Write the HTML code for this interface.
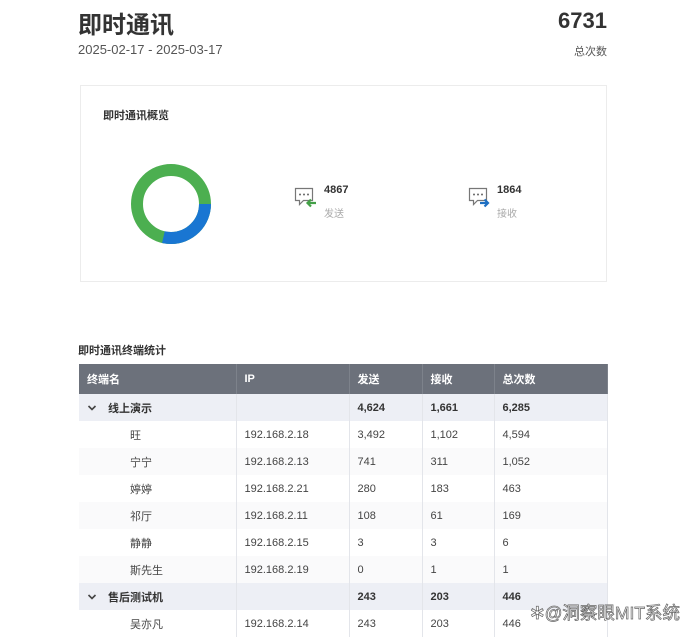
<!DOCTYPE html>
<html><head><meta charset="utf-8"><style>
*{margin:0;padding:0;box-sizing:border-box}
body{width:692px;height:639px;background:#fff;position:relative;overflow:hidden;font-family:"Liberation Sans","Noto Sans CJK SC",sans-serif;color:#333}
.a{position:absolute;white-space:nowrap}
table{position:absolute;left:79px;top:364px;width:528px;border-collapse:collapse;font-size:11px;table-layout:fixed}
td,th{height:27px;padding:0 0 0 8px;text-align:left;border-right:1px solid #e3e5ea;color:#444;font-weight:normal}
th{height:30px;background:#6c717b;color:#fff;font-weight:bold;border-right:1px solid #7d828b}
tr.g td{background:#edeff5;font-weight:bold;color:#333}
tr.s td{background:#fff}
tr.s2 td{background:#fafafb}
td.n{padding-left:51px}
.chev{display:inline-block;width:21px;vertical-align:middle}
</style></head><body>
<div class="a" style="left:78px;top:5px;font-size:24px;font-weight:bold;color:#333">即时通讯</div>
<div class="a" style="left:78px;top:42px;font-size:13px;color:#555">2025-02-17 - 2025-03-17</div>
<div class="a" style="right:85px;top:8px;font-size:22px;font-weight:bold;color:#333">6731</div>
<div class="a" style="right:85px;top:43px;font-size:11px;color:#555">总次数</div>

<div class="a" style="left:80px;top:85px;width:527px;height:197px;border:1px solid #ececec;background:#fff"></div>
<div class="a" style="left:103px;top:107px;font-size:11px;font-weight:bold;color:#333">即时通讯概览</div>
<svg class="a" style="left:127px;top:160px" width="88" height="88" viewBox="0 0 88 88">
<circle cx="44" cy="44" r="34" fill="none" stroke="#4caf50" stroke-width="12"/>
<circle cx="44" cy="44" r="34" fill="none" stroke="#1976d2" stroke-width="12" stroke-dasharray="61 300"/>
</svg>
<svg class="a" style="left:294px;top:187px" width="24" height="22" viewBox="0 0 24 22">
<path d="M1.5 1.5h17v12h-9l-4 4v-4h-4z" fill="none" stroke="#777" stroke-width="1.2"/>
<circle cx="6" cy="7.5" r="1" fill="#666"/><circle cx="10" cy="7.5" r="1" fill="#666"/><circle cx="14" cy="7.5" r="1" fill="#666"/>
<path d="M22 16h-8M17 12.5l-3.5 3.5 3.5 3.5" fill="none" stroke="#43a047" stroke-width="2.2"/>
</svg>
<div class="a" style="left:324px;top:184px;font-size:11px;font-weight:bold;color:#333">4867</div>
<div class="a" style="left:324px;top:205px;font-size:10px;color:#aaa">发送</div>
<svg class="a" style="left:468px;top:187px" width="24" height="22" viewBox="0 0 24 22">
<path d="M1.5 1.5h17v12h-9l-4 4v-4h-4z" fill="none" stroke="#777" stroke-width="1.2"/>
<circle cx="6" cy="7.5" r="1" fill="#666"/><circle cx="10" cy="7.5" r="1" fill="#666"/><circle cx="14" cy="7.5" r="1" fill="#666"/>
<path d="M12 16h8M16.5 12.5l3.5 3.5-3.5 3.5" fill="none" stroke="#1e6fc2" stroke-width="2.2"/>
</svg>
<div class="a" style="left:497px;top:184px;font-size:11px;font-weight:bold;color:#333">1864</div>
<div class="a" style="left:497px;top:205px;font-size:10px;color:#aaa">接收</div>

<div class="a" style="left:78px;top:342px;font-size:11px;font-weight:bold;color:#333">即时通讯终端统计</div>
<table>
<colgroup><col style="width:157px"><col style="width:113px"><col style="width:73px"><col style="width:72px"><col style="width:113px"></colgroup>
<tr><th>终端名</th><th>IP</th><th>发送</th><th>接收</th><th>总次数</th></tr>
<tr class="g"><td><span class="chev"><svg width="10" height="8" viewBox="0 0 10 8"><path d="M1.5 2l3.5 3.5 3.5-3.5" fill="none" stroke="#444" stroke-width="1.6"/></svg></span>线上演示</td><td></td><td>4,624</td><td>1,661</td><td>6,285</td></tr>
<tr class="s"><td class="n">旺</td><td>192.168.2.18</td><td>3,492</td><td>1,102</td><td>4,594</td></tr>
<tr class="s2"><td class="n">宁宁</td><td>192.168.2.13</td><td>741</td><td>311</td><td>1,052</td></tr>
<tr class="s"><td class="n">婷婷</td><td>192.168.2.21</td><td>280</td><td>183</td><td>463</td></tr>
<tr class="s2"><td class="n">祁厅</td><td>192.168.2.11</td><td>108</td><td>61</td><td>169</td></tr>
<tr class="s"><td class="n">静静</td><td>192.168.2.15</td><td>3</td><td>3</td><td>6</td></tr>
<tr class="s2"><td class="n">斯先生</td><td>192.168.2.19</td><td>0</td><td>1</td><td>1</td></tr>
<tr class="g"><td><span class="chev"><svg width="10" height="8" viewBox="0 0 10 8"><path d="M1.5 2l3.5 3.5 3.5-3.5" fill="none" stroke="#444" stroke-width="1.6"/></svg></span>售后测试机</td><td></td><td>243</td><td>203</td><td>446</td></tr>
<tr class="s"><td class="n">吴亦凡</td><td>192.168.2.14</td><td>243</td><td>203</td><td>446</td></tr>
</table>
<div class="a" style="left:530px;top:600px;font-size:17.5px;color:#fff;-webkit-text-stroke:0.7px #666">✲@洞察眼MIT系统</div>
</body></html>
